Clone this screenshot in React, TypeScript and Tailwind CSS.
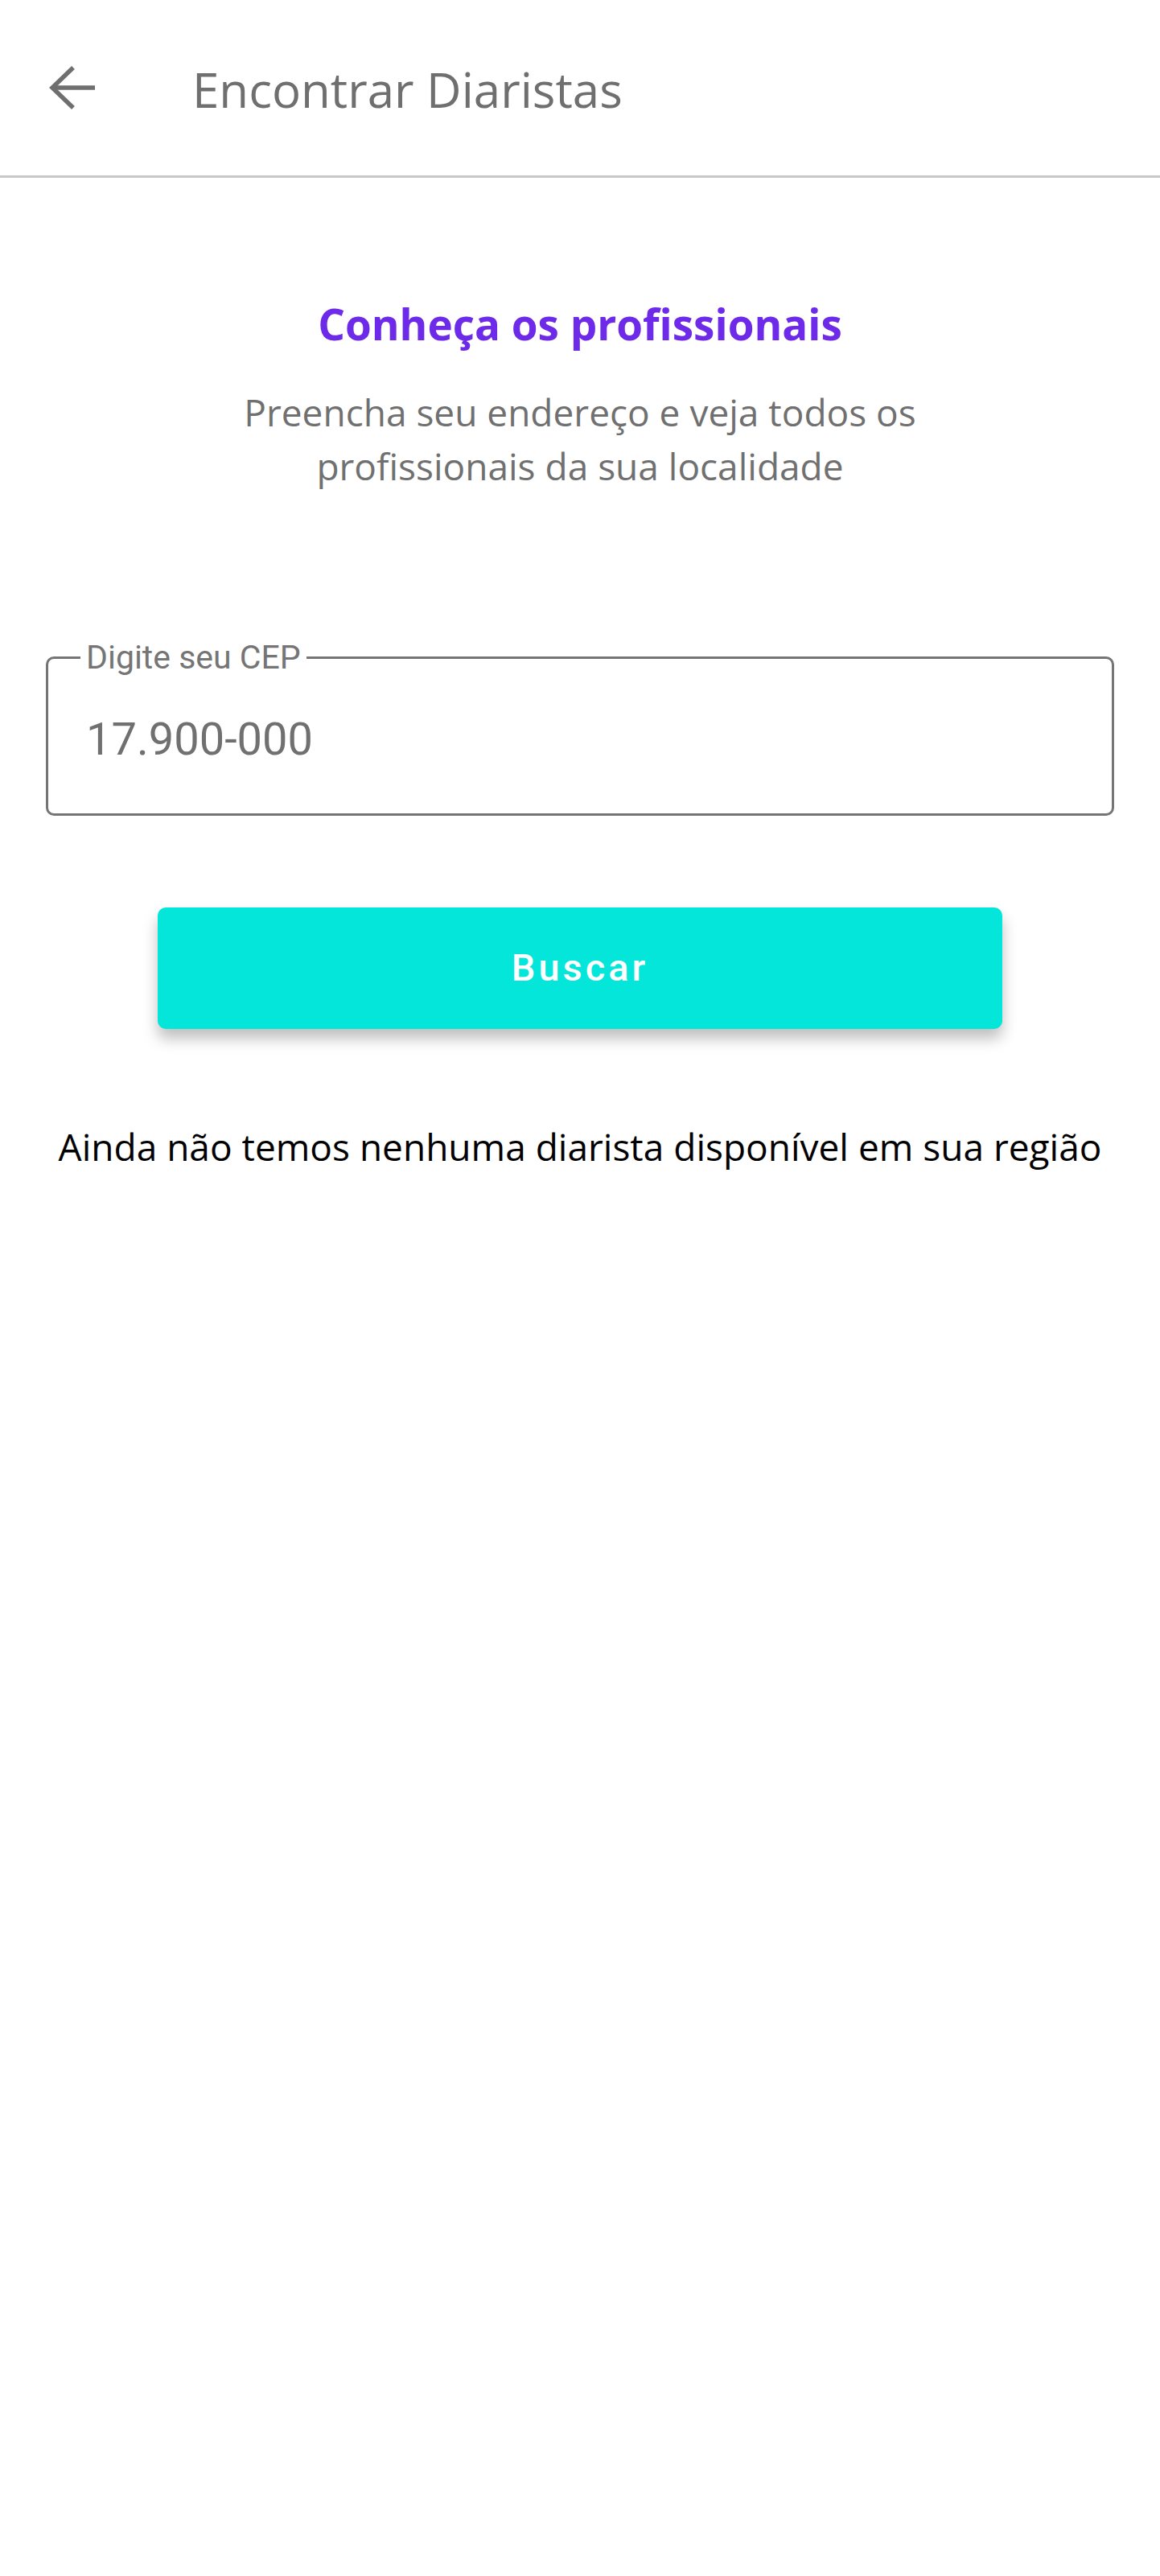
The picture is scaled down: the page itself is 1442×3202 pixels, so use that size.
import React from 'react';

const sans = { fontFamily: '"Open Sans", "Noto Sans", sans-serif' };
const roboto = { fontFamily: 'Roboto, "Noto Sans", sans-serif' };

function BackArrow() {
  return (
    <svg width="60" height="56" viewBox="0 0 60 56" fill="none" stroke="#6f6f6f" strokeWidth={5.5}>
      <path d="M31 3 L5 28 L31 53" strokeLinejoin="miter" />
      <path d="M5 28 H58" />
    </svg>
  );
}

export default function App() {
  return (
    <div className="w-[1442px] min-h-[3202px] bg-white" style={sans}>
      <header className="h-[221px] flex items-center border-b-[3px] border-[#c8c8c8]">
        <button className="ml-[60px] w-[60px] flex items-center">
          <BackArrow />
        </button>
        <h1 className="ml-[119px] text-[60px] text-[#6f6f6f] leading-none mt-[4px]">Encontrar Diaristas</h1>
      </header>

      <section className="flex flex-col items-center pt-[146px]">
        <h2 className="text-[53px] font-bold text-[#6d2ae8] leading-[72px]">Conheça os profissionais</h2>
        <p className="mt-[40px] text-[46px] text-[#707070] text-center leading-[67px]">
          Preencha seu endereço e veja todos os
          <br />
          profissionais da sua localidade
        </p>
      </section>

      <div className="px-[57px] mt-[203px]">
        <div className="relative h-[198px] border-[3px] border-[#757575] rounded-[10px] px-[47px] flex items-center" style={roboto}>
          <span className="absolute left-[40px] top-[-25px] bg-white px-[7px] text-[41px] text-[#757575] leading-[46px]">
            Digite seu CEP
          </span>
          <input
            type="text"
            defaultValue="17.900-000"
            className="w-full bg-transparent outline-none text-[56px] text-[#707070] mt-[8px]"
          />
        </div>
      </div>

      <div className="flex justify-center mt-[114px]">
        <button
          className="w-[1050px] h-[151px] rounded-[10px] bg-[#05e6da] text-white text-[47px] font-medium tracking-[4px] shadow-[0_12px_18px_rgba(0,0,0,0.25)]"
          style={roboto}
        >
          Buscar
        </button>
      </div>

      <p className="mt-[112px] text-center text-[46px] text-black">
        Ainda não temos nenhuma diarista disponível em sua região
      </p>
    </div>
  );
}
